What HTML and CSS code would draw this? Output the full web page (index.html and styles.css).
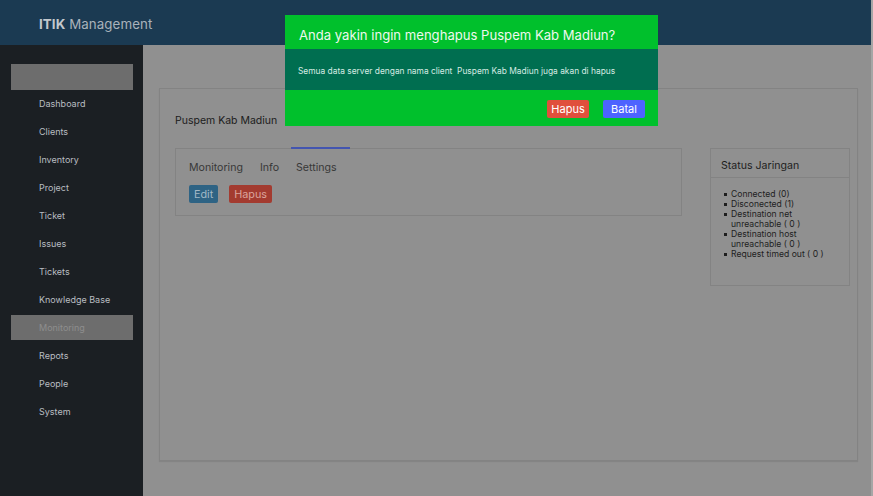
FILE: index.html
```html
<!DOCTYPE html>
<html lang="id">
<head>
<meta charset="utf-8">
<title>ITIK Management</title>
<link rel="stylesheet" href="styles.css">
</head>
<body>
<div class="app">
  <header class="topbar">
    <div class="brand"><b>ITIK</b> Management</div>
  </header>
  <aside class="sidebar">
    <div class="side-top"></div>
    <nav class="nav">
      <a class="nav-item">Dashboard</a>
      <a class="nav-item">Clients</a>
      <a class="nav-item">Inventory</a>
      <a class="nav-item">Project</a>
      <a class="nav-item">Ticket</a>
      <a class="nav-item">Issues</a>
      <a class="nav-item">Tickets</a>
      <a class="nav-item">Knowledge Base</a>
      <a class="nav-item active">Monitoring</a>
      <a class="nav-item">Repots</a>
      <a class="nav-item">People</a>
      <a class="nav-item">System</a>
    </nav>
  </aside>
  <main class="main">
    <section class="card">
      <h2 class="client-title">Puspem Kab Madiun</h2>
      <div class="row">
        <div class="tabs-card">
          <span class="tab-indicator"></span>
          <div class="tabs">
            <span class="tab">Monitoring</span>
            <span class="tab">Info</span>
            <span class="tab">Settings</span>
          </div>
          <div class="actions">
            <button class="btn btn-edit">Edit</button>
            <button class="btn btn-del">Hapus</button>
          </div>
        </div>
        <div class="status-card">
          <div class="status-head">Status Jaringan</div>
          <ul class="status-list">
            <li>Connected (0)</li>
            <li>Disconected (1)</li>
            <li>Destination net unreachable ( 0 )</li>
            <li>Destination host unreachable ( 0 )</li>
            <li>Request timed out ( 0 )</li>
          </ul>
        </div>
      </div>
    </section>
  </main>
  <div class="modal">
    <div class="modal-head">Anda yakin ingin menghapus Puspem Kab Madiun?</div>
    <div class="modal-body">Semua data server dengan nama client&nbsp; Puspem Kab Madiun juga akan di hapus</div>
    <div class="modal-foot">
      <button class="mbtn mbtn-del">Hapus</button>
      <button class="mbtn mbtn-cancel">Batal</button>
    </div>
  </div>
</div>
</body>
</html>
```
FILE: styles.css
```css
* { box-sizing: border-box; }
html, body { margin: 0; padding: 0; }
body {
  font-family: Inter, "Noto Sans", "Liberation Sans", sans-serif;
  background: #909090;
}
.app {
  position: relative;
  width: 873px;
  height: 496px;
  display: grid;
  grid-template-columns: 143px 1fr;
  grid-template-rows: 45px 1fr;
  border-right: 2px solid #a6a6a6;
  overflow: hidden;
}
.topbar {
  grid-column: 1 / 3;
  background: #1b3a52;
  display: flex;
  align-items: center;
  padding: 2px 0 0 39px;
}
.brand {
  font-size: 13.3px;
  color: #a9b2bb;
  letter-spacing: 0.1px;
}
.brand b { color: #c3c8cd; font-weight: 700; }

.sidebar {
  background: #1b1f23;
  padding-top: 19px;
}
.side-top {
  height: 26px;
  margin: 0 10px 0 11px;
  background: #6d6d6d;
}
.nav { display: flex; flex-direction: column; gap: 3px; margin-top: 1px; }
.nav-item {
  height: 25px;
  margin: 0 10px 0 11px;
  padding-left: 28px;
  display: flex;
  align-items: center;
  font-size: 9px;
  color: #b9bdc1;
}
.nav-item.active { background: #6d6d6d; color: #8d8d8d; }

.main {
  padding: 43px 13px 35px 16px;
  display: flex;
}
.card {
  flex: 1;
  border: 1px solid #838383;
  box-shadow: 0 1px 1px rgba(0,0,0,0.08);
  padding: 24px 7px 0 15px;
}
.client-title {
  margin: 0;
  font-size: 10.5px;
  font-weight: 400;
  line-height: 16px;
  color: #1c1c1c;
}
.row {
  display: flex;
  gap: 28px;
  margin-top: 19px;
  align-items: flex-start;
}
.tabs-card {
  position: relative;
  width: 507px;
  height: 68px;
  border: 1px solid #838383;
  padding: 11px 13px 0;
}
.tab-indicator {
  position: absolute;
  left: 115px;
  top: -2px;
  width: 59px;
  height: 2px;
  background: #4355b0;
}
.tabs { display: flex; gap: 17px; font-size: 10.6px; line-height: 16px; color: #383838; }
.actions { display: flex; gap: 10px; margin-top: 9px; }
.btn {
  border: 0;
  height: 18px;
  padding: 0 5px;
  font-family: inherit;
  font-size: 10.8px;
  border-radius: 2px;
}
.btn-edit { background: #2e6384; color: #a2b8c6; }
.btn-del { background: #a33b30; color: #dba49c; margin-left: 1px; }

.status-card {
  width: 140px;
  height: 138px;
  border: 1px solid #838383;
}
.status-head {
  height: 29px;
  border-bottom: 1px solid #838383;
  padding: 5px 0 0 10px;
  display: flex;
  align-items: center;
  font-size: 10.6px;
  color: #1e1e1e;
}
.status-list {
  list-style: none;
  margin: 11px 0 0;
  padding: 0 20px 0 20px;
  font-size: 8.6px;
  line-height: 10px;
  color: #1e1e1e;
}
.status-list li { position: relative; }
.status-list li::before {
  content: "";
  position: absolute;
  left: -7px;
  top: 4px;
  width: 3px;
  height: 3px;
  background: #1e1e1e;
}

.modal {
  position: absolute;
  left: 285px;
  top: 15px;
  width: 373px;
  display: flex;
  flex-direction: column;
}
.modal-head {
  height: 34px;
  background: #00c02c;
  color: #eef8ee;
  font-size: 13.1px;
  display: flex;
  align-items: center;
  padding: 5px 0 0 14px;
}
.modal-body {
  height: 41px;
  background: #006e50;
  color: #d6ebe3;
  font-size: 8.4px;
  display: flex;
  align-items: center;
  padding: 2px 0 0 13px;
}
.modal-foot {
  height: 36px;
  background: #00c02c;
  display: flex;
  justify-content: flex-end;
  gap: 14px;
  padding: 10px 13px 0 0;
}
.mbtn {
  width: 42px;
  height: 18px;
  border: 0;
  border-radius: 2px;
  color: #ffffff;
  font-family: inherit;
  font-size: 11px;
  padding: 0;
}
.mbtn-del { background: #e04f3c; }
.mbtn-cancel { background: #4d63ff; }
```
